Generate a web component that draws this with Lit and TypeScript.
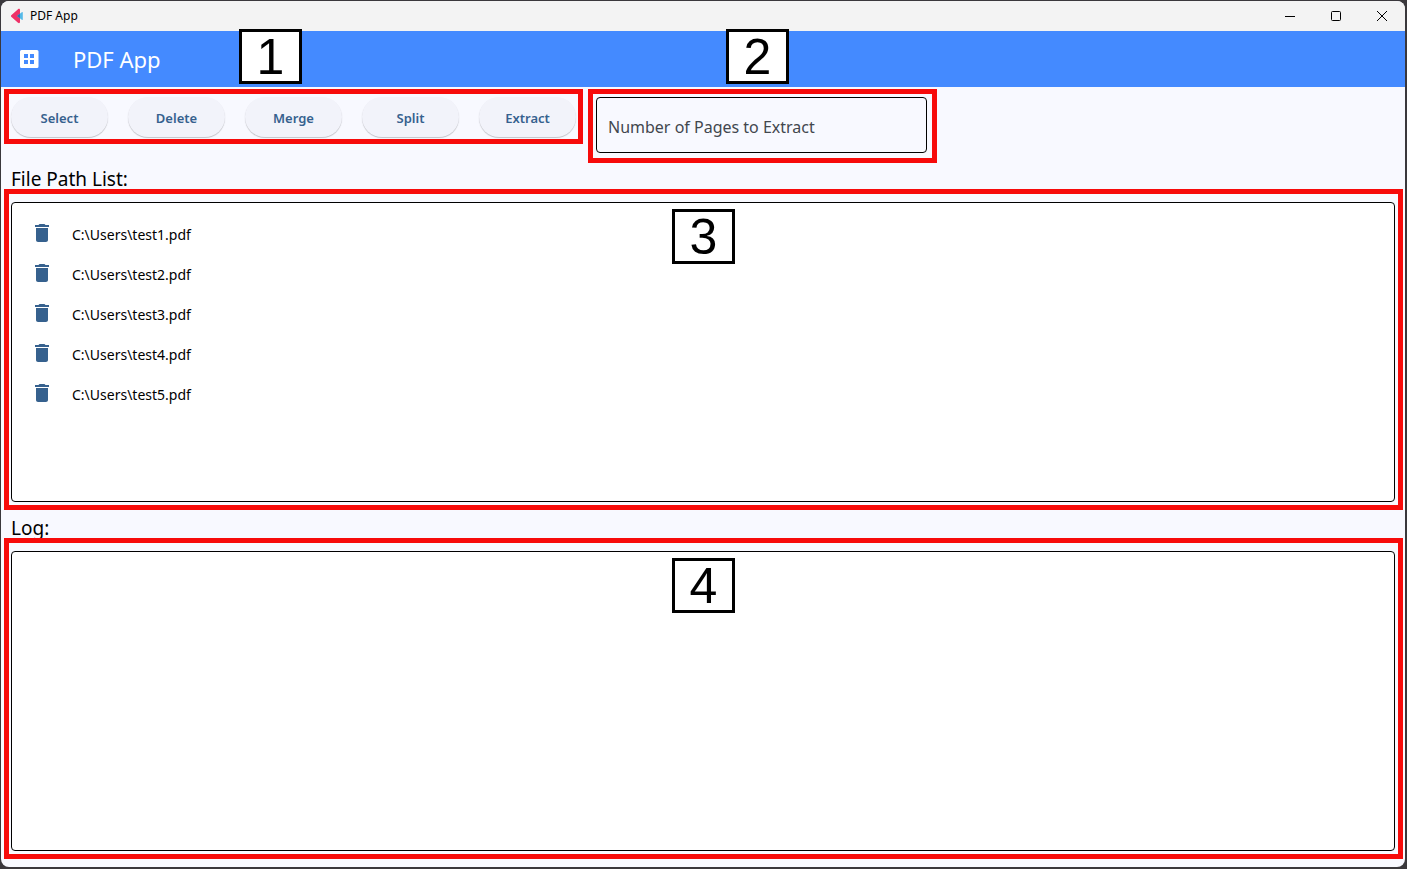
import { LitElement, html, css } from "lit";
import { customElement, state } from "lit/decorators.js";

@customElement("callout-frame")
class CalloutFrame extends LitElement {
  static styles = css`
    :host {
      position: absolute;
      box-sizing: border-box;
      border: 5px solid #f70b0b;
      pointer-events: none;
    }
  `;
  render() {
    return html``;
  }
}

@customElement("app-root")
class AppRoot extends LitElement {
  @state() private files = [1, 2, 3, 4, 5].map((n) => `C:\\Users\\test${n}.pdf`);
  private actions = ["Select", "Delete", "Merge", "Split", "Extract"];

  static styles = css`
    :host {
      display: flex;
      box-sizing: border-box;
      min-height: 100vh;
      padding: 1px 2px 2px 1px;
      background: #3a383c;
      font-family: "Noto Sans", "Open Sans", sans-serif;
      color: #000;
    }
    *, *::before { box-sizing: border-box; }
    .window {
      flex: 1;
      min-width: 0;
      display: flex;
      flex-direction: column;
      border-radius: 8px;
      overflow: hidden;
      background: #f8f9ff;
    }
    .titlebar {
      display: flex;
      align-items: center;
      height: 30px;
      padding-left: 9px;
      background: #f3f3f3;
      font-size: 12px;
      line-height: 16px;
    }
    .logo { width: 14px; height: 16px; margin-right: 6px; }
    .caption { flex: 1; }
    .winbtn {
      display: grid;
      place-items: center;
      width: 46px;
      height: 30px;
      padding: 0;
      border: 0;
      background: none;
    }
    .appbar {
      display: flex;
      align-items: center;
      height: 56px;
      padding-left: 16px;
      gap: 32px;
      background: #448aff;
      color: #fff;
    }
    .appbar h1 {
      margin: 0;
      font-size: 22px;
      line-height: 28px;
      font-weight: 400;
    }
    .body {
      flex: 1;
      display: flex;
      flex-direction: column;
      gap: 10px;
      padding: 10px 10px 16px;
    }
    .toolbar { display: flex; align-items: flex-start; gap: 20px; }
    .actions { position: relative; display: flex; gap: 20px; }
    .action {
      width: 97px;
      height: 40px;
      padding: 2px 0 0;
      border: 0;
      border-radius: 20px;
      background: #f2f3fa;
      box-shadow: 0 1px 1px rgba(0, 0, 0, 0.22);
      color: #36618e;
      font: 600 13px/20px "Noto Sans", "Open Sans", sans-serif;
    }
    .field { position: relative; width: 331px; }
    .field input {
      display: block;
      width: 100%;
      height: 56px;
      padding: 3px 11px 0;
      border: 1px solid #000;
      border-radius: 4px;
      background: transparent;
      font: 400 16px/24px "Noto Sans", "Open Sans", sans-serif;
      color: #191c20;
    }
    .field input::placeholder { color: #42474e; opacity: 1; }
    h2 {
      margin: 0;
      padding-top: 4px;
      font-size: 19px;
      line-height: 25px;
      font-weight: 400;
    }
    .panel {
      position: relative;
      flex: 1 0 0;
      min-height: 220px;
      padding: 10px;
      border: 1px solid #000;
      border-radius: 4px;
      background: #fff;
    }
    ul { margin: 0; padding: 0; list-style: none; }
    li {
      display: flex;
      align-items: center;
      gap: 10px;
      height: 40px;
      font-size: 14px;
      line-height: 20px;
    }
    .path { padding-top: 4px; }
    .trash {
      display: grid;
      place-items: center;
      width: 40px;
      height: 40px;
      padding: 0;
      border: 0;
      background: none;
      color: #36618e;
    }
    svg { display: block; }
    .frame-actions { inset: -8px -7px -7px; }
    .frame-field { inset: -8px -10px -10px -8px; }
    .frame-panel { inset: -14px -9px -9px -8px; }
    .badge {
      position: absolute;
      z-index: 1;
      width: 63px;
      height: 55px;
      border: 3px solid #000;
      background: #fff;
      text-align: center;
      font: 50px/51px "Liberation Sans", Arial, sans-serif;
    }
    .badge-actions { left: 228px; top: -68px; }
    .badge-field { left: 130px; top: -68px; }
    .badge-panel { left: calc(50% - 31px); top: 6px; }
  `;

  private removeFile(path: string) {
    this.files = this.files.filter((f) => f !== path);
  }

  render() {
    return html`
      <div class="window">
        <header class="titlebar">
          <svg class="logo" viewBox="0 0 14 16" aria-hidden="true">
            <path d="M1.500 7 8 1.200C9 .5 10 .8 10 2v12c0 1.200-1 1.500-2 .8L1.500 9c-.8-.7-.8-1.300 0-2z" fill="#ee3167" />
            <path d="M7 8 11.800 4.300c.5-.4 1-.2 1 .4v6.600c0 .6-.5.8-1 .4z" fill="#55b9e8" />
            <path d="M7 8 10 5.700v4.600z" fill="#2b6fb0" />
          </svg>
          <span class="caption">PDF App</span>
          <button class="winbtn" aria-label="Minimize">
            <svg width="10" height="10"><path d="M0 5.500h10" stroke="#000" /></svg>
          </button>
          <button class="winbtn" aria-label="Maximize">
            <svg width="10" height="10"><rect x=".5" y=".5" width="9" height="9" rx="1" fill="none" stroke="#000" /></svg>
          </button>
          <button class="winbtn" aria-label="Close">
            <svg width="10" height="10"><path d="M0 0l10 10M10 0L0 10" stroke="#000" /></svg>
          </button>
        </header>
        <div class="appbar">
          <svg width="24" height="24" viewBox="0 0 24 24" aria-hidden="true">
            <path fill="#fff" fill-rule="evenodd" d="M4.500 3h15.500a1.500 1.500 0 0 1 1.500 1.500v15a1.500 1.500 0 0 1-1.500 1.500h-15.500a1.500 1.500 0 0 1-1.500-1.500v-15a1.500 1.500 0 0 1 1.500-1.500zM7 7v4h4V7zM13 7v4h4V7zM7 13v4h4v-4zM13 13v4h4v-4z" />
          </svg>
          <h1>PDF App</h1>
        </div>
        <main class="body">
          <div class="toolbar">
            <div class="actions">
              ${this.actions.map((a) => html`<button class="action">${a}</button>`)}
              <callout-frame class="frame-actions"></callout-frame>
              <span class="badge badge-actions">1</span>
            </div>
            <div class="field">
              <input type="text" aria-label="Number of Pages to Extract" placeholder="Number of Pages to Extract" />
              <callout-frame class="frame-field"></callout-frame>
              <span class="badge badge-field">2</span>
            </div>
          </div>
          <h2>File Path List:</h2>
          <section class="panel" aria-label="File Path List">
            <ul>
              ${this.files.map(
                (f) => html`<li>
                  <button class="trash" aria-label="Remove ${f}" @click=${() => this.removeFile(f)}>
                    <svg width="24" height="24" viewBox="0 0 24 24">
                      <path fill="currentColor" d="M6 19c0 1.100.9 2 2 2h8c1.100 0 2-.9 2-2V7H6v12zM19 4h-3.500l-1-1h-5l-1 1H5v2h14V4z" />
                    </svg>
                  </button>
                  <span class="path">${f}</span>
                </li>`
              )}
            </ul>
            <callout-frame class="frame-panel"></callout-frame>
            <span class="badge badge-panel">3</span>
          </section>
          <h2>Log:</h2>
          <section class="panel" aria-label="Log">
            <callout-frame class="frame-panel"></callout-frame>
            <span class="badge badge-panel">4</span>
          </section>
        </main>
      </div>
    `;
  }
}
